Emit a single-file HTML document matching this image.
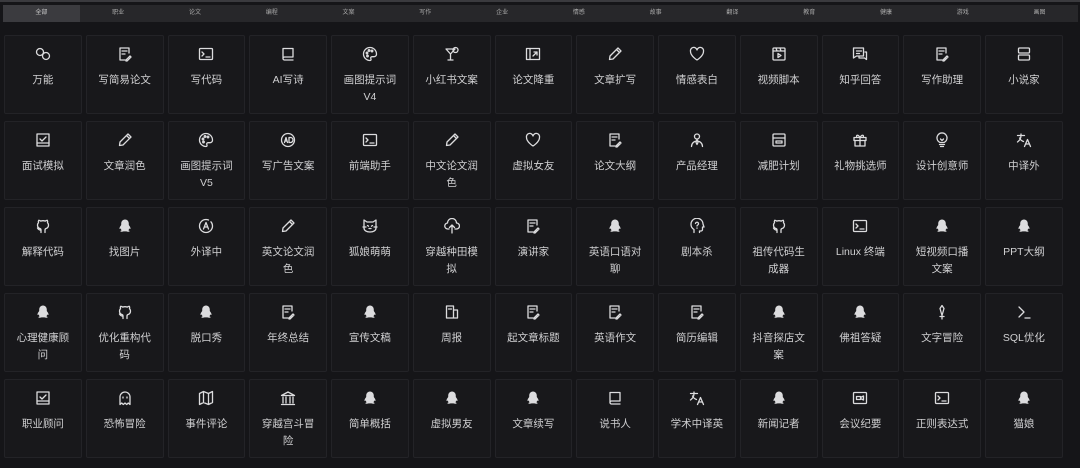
<!DOCTYPE html>
<html><head><meta charset="utf-8"><style>
*{margin:0;padding:0;box-sizing:border-box}
body{width:1080px;height:468px;background:#151518;overflow:hidden;font-family:"Liberation Sans","Noto Sans CJK SC",sans-serif;color:#d4d4d6}
.top{position:absolute;left:0;top:0;width:1080px;height:2px;background:#3a3a3e}
.tabs{position:absolute;left:3px;top:5px;width:1075px;height:17px;background:#27272a;display:flex}
.tabs div{flex:1;font-size:6px;color:#aaa;text-align:center;line-height:17px}
.tabs div.a{background:#3b3b3f;color:#ccc}
.grid{position:absolute;left:4px;top:35px;display:grid;grid-template-columns:repeat(13,77.75px);column-gap:4px;row-gap:7px}
.c{height:79px;background:#18181b;border:1px solid #232327;border-radius:2px;text-align:center}
.c svg{display:block;margin:10px auto 0;width:16px;height:16px;fill:none;stroke:#dcdcde;stroke-width:1.3;stroke-linecap:round;stroke-linejoin:round}
.c p{font-size:10.5px;line-height:17px;margin-top:10px;padding:0 4px;color:#d0d0d2}
</style></head><body>
<div class="top"></div>
<div class="tabs"><div class="a">全部</div><div>职业</div><div>论文</div><div>编程</div><div>文案</div><div>写作</div><div>企业</div><div>情感</div><div>故事</div><div>翻译</div><div>教育</div><div>健康</div><div>游戏</div><div>画图</div></div>
<svg width="0" height="0" style="position:absolute">
<defs>
<symbol id="doc" viewBox="0 0 16 16"><path d="M12 7V2H3v12h5M5 5h5M5 8h3M9 14l4-4 1 1-4 4H9z"/></symbol>
<symbol id="term" viewBox="0 0 16 16"><rect x="1.5" y="2.5" width="13" height="11" rx="1"/><path d="M4 6l2 2-2 2M8 11h4"/></symbol>
<symbol id="book" viewBox="0 0 16 16"><path d="M3 13V2.5h10V11H4.5a1.5 1.5 0 000 3H13"/></symbol>
<symbol id="pal" viewBox="0 0 16 16"><path d="M8 1.5a6.5 6.5 0 000 13c1.2 0 1.2-1.2.8-2s.2-1.8 1.3-1.8H12a2.5 2.5 0 002.5-2.5c0-3.7-2.9-6.7-6.5-6.7z"/><circle cx="5" cy="7" r=".8"/><circle cx="7" cy="4.5" r=".8"/><circle cx="10" cy="5" r=".8"/><circle cx="5.5" cy="10" r=".8"/></symbol>
<symbol id="cup" viewBox="0 0 16 16"><path d="M2 3h9L6.5 8 2 3zM6.5 8v6M4 14h5"/><circle cx="11.5" cy="4" r="2.5"/></symbol>
<symbol id="img" viewBox="0 0 16 16"><rect x="1.5" y="2.5" width="13" height="11"/><path d="M5 2.5v11M8 10l4-4M12 9V6H9"/></symbol>
<symbol id="pen" viewBox="0 0 16 16"><path d="M11 2l3 3-8 8-3.5.5L3 10z M9.5 3.5l3 3"/></symbol>
<symbol id="heart" viewBox="0 0 16 16"><path d="M8 14S1.5 10 1.5 5.5A3.3 3.3 0 018 4a3.3 3.3 0 016.5 1.5C14.5 10 8 14 8 14z"/></symbol>
<symbol id="vid" viewBox="0 0 16 16"><rect x="2" y="2" width="12" height="12" rx="1"/><path d="M2 5h12M5 2l1 3M9 2l1 3M7 7.5v4l3-2z"/></symbol>
<symbol id="chat" viewBox="0 0 16 16"><path d="M1.5 2h10v8h-7l-3 2zM4.5 5h5M4.5 7.5h3M13 6h1.5v7.5l-2-1.5H7v-2"/></symbol>
<symbol id="nov" viewBox="0 0 16 16"><rect x="2.5" y="2" width="11" height="5" rx="1"/><rect x="2.5" y="9" width="11" height="5" rx="1"/></symbol>
<symbol id="ring" viewBox="0 0 16 16"><circle cx="5" cy="6" r="3.5"/><circle cx="11" cy="10" r="3.5"/></symbol>
<symbol id="chk" viewBox="0 0 16 16"><rect x="2" y="2" width="12" height="12"/><path d="M5 7l2 2 4-4M2 11h12"/></symbol>
<symbol id="ad" viewBox="0 0 16 16"><circle cx="8" cy="8" r="6.5"/><path d="M4.5 10.5l1.5-5 1.5 5M5 9h2M9 5.5h1.5a2.5 2.5 0 010 5H9z"/></symbol>
<symbol id="user" viewBox="0 0 16 16"><circle cx="8" cy="4.5" r="2.5"/><path d="M2.5 14.5a5.5 5.5 0 0111 0M8 7.5l-1 3 1 2 1-2z"/></symbol>
<symbol id="cal" viewBox="0 0 16 16"><rect x="2" y="2" width="12" height="12" rx="1"/><path d="M2 6h12M5 9h6v2H5z"/></symbol>
<symbol id="gift" viewBox="0 0 16 16"><rect x="2" y="5.5" width="12" height="3"/><path d="M3 8.5V14h10V8.5M8 5.5V14M8 5.5C6 2 3.5 3 5 5.5M8 5.5c2-3.5 4.5-2.5 3 0"/></symbol>
<symbol id="bulb" viewBox="0 0 16 16"><path d="M5.5 12.5h5M6.5 14.5h3M6 10.5a5 5 0 114 0z"/><path d="M6.5 7l1.5 1.5L9.5 7"/></symbol>
<symbol id="tr" viewBox="0 0 16 16"><path d="M1.5 3.5h7M5 2v1.5c0 3-1.5 5-3.5 6.5M3.5 6c1 2 2.5 3 4 3.5M8.5 14.5l3-7 3 7M9.7 12h3.6"/></symbol>
<symbol id="gh" viewBox="0 0 16 16"><path d="M6 14.5v-2.5c-2.5.5-3-1.5-3.5-2M10 14.5v-2.5c0-1 .5-1.3 1-1.5 2-.5 2.5-2 2.5-3.5 0-1-.3-1.7-1-2.3.2-.8.2-1.7-.2-2.4 0 0-.8 0-2 .8a7 7 0 00-4.6 0C4.5 2.3 3.7 2.3 3.7 2.3c-.4.7-.4 1.6-.2 2.4-.7.6-1 1.3-1 2.3 0 1.5.5 3 2.5 3.5.5.2 1 .5 1 1.5"/></symbol>
<symbol id="qq" viewBox="0 0 16 16"><path style="fill:#dcdcde;stroke:none" d="M8 1.5c-2.3 0-3.8 1.8-3.8 4.2v1.3L3 8.8c-.5.9-.7 2-.3 2.2.3.1.7-.3 1-.8.1.8.5 1.5 1 2-.9.3-1.5.8-1.3 1.2.3.5 2 .5 3.2 0h2.8c1.2.5 2.9.5 3.2 0 .2-.4-.4-.9-1.300-1.2.5-.5.9-1.2 1-2 .3.5.7.9 1 .8.4-.2.2-1.3-.3-2.2L11.8 7V5.7c0-2.4-1.5-4.2-3.8-4.2z"/></symbol>
<symbol id="tra" viewBox="0 0 16 16"><circle cx="8" cy="8" r="6.5" stroke-dasharray="33 3"/><path d="M5.5 11L8 4.5l2.5 6.5M6.5 9h3"/></symbol>
<symbol id="cat" viewBox="0 0 16 16"><path d="M2 2l3 2h6l3-2v8c0 2.5-2.5 4-6 4s-6-1.5-6-4z"/><path d="M5.5 7.5l1 .7M10.5 7.5l-1 .7M7 10.5h2M1 9h3M12 9h3"/></symbol>
<symbol id="tree" viewBox="0 0 16 16"><path d="M5 11H4a3 3 0 01-.5-6A4.5 4.5 0 0112.5 5a3 3 0 010 6H11M8 15V7M5.5 9.5L8 7l2.5 2.5"/></symbol>
<symbol id="head" viewBox="0 0 16 16"><path d="M5 14.5v-3c-2-1.2-3-3-3-5A6 6 0 0114 6l1 3h-1.5v2.5a1.5 1.5 0 01-1.5 1.5h-1.5v1.5"/><path d="M6.5 5.5a1.5 1.5 0 113 .5c0 1-1.5 1-1.5 2M8 10v.2"/></symbol>
<symbol id="week" viewBox="0 0 16 16"><path d="M2.5 14V2h7v12zM9.5 6h4v8h-4M4.5 5h3"/></symbol>
<symbol id="sword" viewBox="0 0 16 16"><path d="M8 1.5l2 3-2 7-2-7zM8 11.5V15M6 12.5h4"/></symbol>
<symbol id="sql" viewBox="0 0 16 16"><path d="M3 3l5 5-5 5M9 14h5"/></symbol>
<symbol id="ghost" viewBox="0 0 16 16"><path d="M3 14.5V7a5 5 0 0110 0v7.5l-1.7-1.5-1.6 1.5L8 13l-1.7 1.5L4.7 13z"/><path d="M6 7v1M10 7v1"/></symbol>
<symbol id="map" viewBox="0 0 16 16"><path d="M1.5 3.5l4-2 5 2 4-2V12.5l-4 2-5-2-4 2zM5.5 1.5v11M10.5 3.5v11"/></symbol>
<symbol id="bank" viewBox="0 0 16 16"><path d="M1.5 5.5L8 2l6.5 3.5zM3 7v6M6 7v6M10 7v6M13 7v6M1.5 14.5h13"/></symbol>
<symbol id="meet" viewBox="0 0 16 16"><rect x="1.5" y="2.5" width="13" height="11" rx="1"/><path d="M4.5 6.5v3h4v-3zM8.5 7.5l3-1.5v4l-3-1.5"/></symbol>
</defs></svg>
<div class="grid">
<div class="c"><svg><use href="#ring"/></svg><p>万能</p></div>
<div class="c"><svg><use href="#doc"/></svg><p>写简易论文</p></div>
<div class="c"><svg><use href="#term"/></svg><p>写代码</p></div>
<div class="c"><svg><use href="#book"/></svg><p>AI写诗</p></div>
<div class="c"><svg><use href="#pal"/></svg><p>画图提示词<br>V4</p></div>
<div class="c"><svg><use href="#cup"/></svg><p>小红书文案</p></div>
<div class="c"><svg><use href="#img"/></svg><p>论文降重</p></div>
<div class="c"><svg><use href="#pen"/></svg><p>文章扩写</p></div>
<div class="c"><svg><use href="#heart"/></svg><p>情感表白</p></div>
<div class="c"><svg><use href="#vid"/></svg><p>视频脚本</p></div>
<div class="c"><svg><use href="#chat"/></svg><p>知乎回答</p></div>
<div class="c"><svg><use href="#doc"/></svg><p>写作助理</p></div>
<div class="c"><svg><use href="#nov"/></svg><p>小说家</p></div>

<div class="c"><svg><use href="#chk"/></svg><p>面试模拟</p></div>
<div class="c"><svg><use href="#pen"/></svg><p>文章润色</p></div>
<div class="c"><svg><use href="#pal"/></svg><p>画图提示词<br>V5</p></div>
<div class="c"><svg><use href="#ad"/></svg><p>写广告文案</p></div>
<div class="c"><svg><use href="#term"/></svg><p>前端助手</p></div>
<div class="c"><svg><use href="#pen"/></svg><p>中文论文润<br>色</p></div>
<div class="c"><svg><use href="#heart"/></svg><p>虚拟女友</p></div>
<div class="c"><svg><use href="#doc"/></svg><p>论文大纲</p></div>
<div class="c"><svg><use href="#user"/></svg><p>产品经理</p></div>
<div class="c"><svg><use href="#cal"/></svg><p>减肥计划</p></div>
<div class="c"><svg><use href="#gift"/></svg><p>礼物挑选师</p></div>
<div class="c"><svg><use href="#bulb"/></svg><p>设计创意师</p></div>
<div class="c"><svg><use href="#tr"/></svg><p>中译外</p></div>

<div class="c"><svg><use href="#gh"/></svg><p>解释代码</p></div>
<div class="c"><svg><use href="#qq"/></svg><p>找图片</p></div>
<div class="c"><svg><use href="#tra"/></svg><p>外译中</p></div>
<div class="c"><svg><use href="#pen"/></svg><p>英文论文润<br>色</p></div>
<div class="c"><svg><use href="#cat"/></svg><p>狐娘萌萌</p></div>
<div class="c"><svg><use href="#tree"/></svg><p>穿越种田模<br>拟</p></div>
<div class="c"><svg><use href="#doc"/></svg><p>演讲家</p></div>
<div class="c"><svg><use href="#qq"/></svg><p>英语口语对<br>聊</p></div>
<div class="c"><svg><use href="#head"/></svg><p>剧本杀</p></div>
<div class="c"><svg><use href="#gh"/></svg><p>祖传代码生<br>成器</p></div>
<div class="c"><svg><use href="#term"/></svg><p>Linux 终端</p></div>
<div class="c"><svg><use href="#qq"/></svg><p>短视频口播<br>文案</p></div>
<div class="c"><svg><use href="#qq"/></svg><p>PPT大纲</p></div>

<div class="c"><svg><use href="#qq"/></svg><p>心理健康顾<br>问</p></div>
<div class="c"><svg><use href="#gh"/></svg><p>优化重构代<br>码</p></div>
<div class="c"><svg><use href="#qq"/></svg><p>脱口秀</p></div>
<div class="c"><svg><use href="#doc"/></svg><p>年终总结</p></div>
<div class="c"><svg><use href="#qq"/></svg><p>宣传文稿</p></div>
<div class="c"><svg><use href="#week"/></svg><p>周报</p></div>
<div class="c"><svg><use href="#doc"/></svg><p>起文章标题</p></div>
<div class="c"><svg><use href="#doc"/></svg><p>英语作文</p></div>
<div class="c"><svg><use href="#doc"/></svg><p>简历编辑</p></div>
<div class="c"><svg><use href="#qq"/></svg><p>抖音探店文<br>案</p></div>
<div class="c"><svg><use href="#qq"/></svg><p>佛祖答疑</p></div>
<div class="c"><svg><use href="#sword"/></svg><p>文字冒险</p></div>
<div class="c"><svg><use href="#sql"/></svg><p>SQL优化</p></div>

<div class="c"><svg><use href="#chk"/></svg><p>职业顾问</p></div>
<div class="c"><svg><use href="#ghost"/></svg><p>恐怖冒险</p></div>
<div class="c"><svg><use href="#map"/></svg><p>事件评论</p></div>
<div class="c"><svg><use href="#bank"/></svg><p>穿越宫斗冒<br>险</p></div>
<div class="c"><svg><use href="#qq"/></svg><p>简单概括</p></div>
<div class="c"><svg><use href="#qq"/></svg><p>虚拟男友</p></div>
<div class="c"><svg><use href="#qq"/></svg><p>文章续写</p></div>
<div class="c"><svg><use href="#book"/></svg><p>说书人</p></div>
<div class="c"><svg><use href="#tr"/></svg><p>学术中译英</p></div>
<div class="c"><svg><use href="#qq"/></svg><p>新闻记者</p></div>
<div class="c"><svg><use href="#meet"/></svg><p>会议纪要</p></div>
<div class="c"><svg><use href="#term"/></svg><p>正则表达式</p></div>
<div class="c"><svg><use href="#qq"/></svg><p>猫娘</p></div>
</div>
</body></html>
